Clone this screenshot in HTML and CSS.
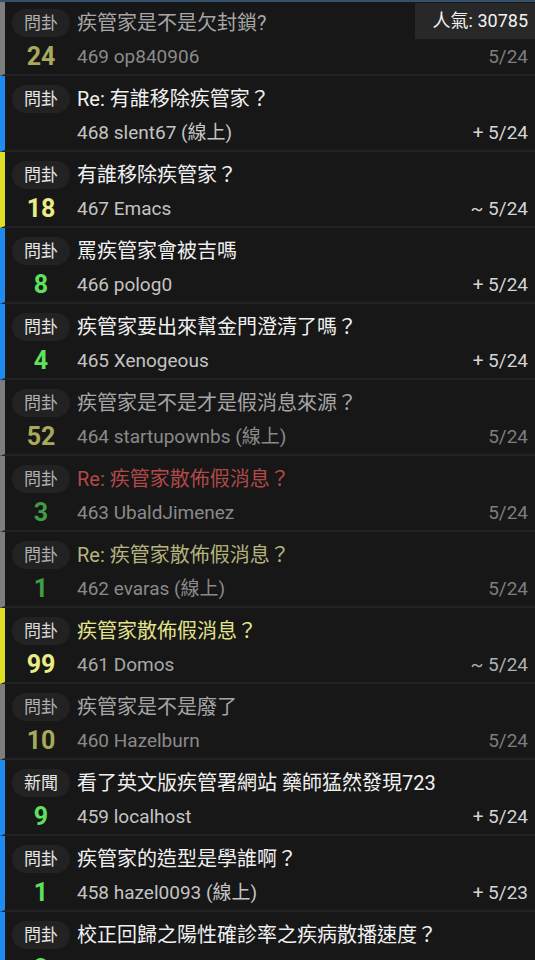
FILE: index.html
```html
<!DOCTYPE html>
<html lang="zh-Hant">
<head>
<meta charset="utf-8">
<title>PTT</title>
<link rel="stylesheet" href="styles.css">
</head>
<body>
<div class="list">
  <div class="row s-gray read">
    <span class="tag">問卦</span>
    <div class="title">疾管家是不是欠封鎖?</div>
    <span class="num dy">24</span>
    <div class="meta"><span>469 op840906</span><span class="date">5/24</span></div>
  </div>
  <div class="row s-blue">
    <span class="tag">問卦</span>
    <div class="title">Re: 有誰移除疾管家？</div>
    <span class="num"></span>
    <div class="meta"><span>468 slent67 (線上)</span><span class="date">+ 5/24</span></div>
  </div>
  <div class="row s-yellow">
    <span class="tag">問卦</span>
    <div class="title">有誰移除疾管家？</div>
    <span class="num by">18</span>
    <div class="meta"><span>467 Emacs</span><span class="date">~ 5/24</span></div>
  </div>
  <div class="row s-blue">
    <span class="tag">問卦</span>
    <div class="title">罵疾管家會被吉嗎</div>
    <span class="num bg">8</span>
    <div class="meta"><span>466 polog0</span><span class="date">+ 5/24</span></div>
  </div>
  <div class="row s-blue">
    <span class="tag">問卦</span>
    <div class="title">疾管家要出來幫金門澄清了嗎？</div>
    <span class="num bg">4</span>
    <div class="meta"><span>465 Xenogeous</span><span class="date">+ 5/24</span></div>
  </div>
  <div class="row s-gray read">
    <span class="tag">問卦</span>
    <div class="title">疾管家是不是才是假消息來源？</div>
    <span class="num dy">52</span>
    <div class="meta"><span>464 startupownbs (線上)</span><span class="date">5/24</span></div>
  </div>
  <div class="row s-gray read">
    <span class="tag">問卦</span>
    <div class="title t-red">Re: 疾管家散佈假消息？</div>
    <span class="num dg">3</span>
    <div class="meta"><span>463 UbaldJimenez</span><span class="date">5/24</span></div>
  </div>
  <div class="row s-gray read">
    <span class="tag">問卦</span>
    <div class="title t-olive">Re: 疾管家散佈假消息？</div>
    <span class="num dg">1</span>
    <div class="meta"><span>462 evaras (線上)</span><span class="date">5/24</span></div>
  </div>
  <div class="row s-yellow read">
    <span class="tag">問卦</span>
    <div class="title t-yellow">疾管家散佈假消息？</div>
    <span class="num by">99</span>
    <div class="meta"><span>461 Domos</span><span class="date">~ 5/24</span></div>
  </div>
  <div class="row s-gray read">
    <span class="tag">問卦</span>
    <div class="title">疾管家是不是廢了</div>
    <span class="num dy">10</span>
    <div class="meta"><span>460 Hazelburn</span><span class="date">5/24</span></div>
  </div>
  <div class="row s-blue">
    <span class="tag">新聞</span>
    <div class="title">看了英文版疾管署網站 藥師猛然發現723</div>
    <span class="num bg">9</span>
    <div class="meta"><span>459 localhost</span><span class="date">+ 5/24</span></div>
  </div>
  <div class="row s-blue">
    <span class="tag">問卦</span>
    <div class="title">疾管家的造型是學誰啊？</div>
    <span class="num bg">1</span>
    <div class="meta"><span>458 hazel0093 (線上)</span><span class="date">+ 5/23</span></div>
  </div>
  <div class="row s-blue">
    <span class="tag">問卦</span>
    <div class="title">校正回歸之陽性確診率之疾病散播速度？</div>
    <span class="num bg">3</span>
    <div class="meta"><span>457 elin</span><span class="date">5/23</span></div>
  </div>
</div>
<div class="popularity">人氣: 30785</div>
</body>
</html>
```
FILE: styles.css
```css
html, body {
  margin: 0;
  padding: 0;
  background: #161616;
  height: 960px;
  overflow: hidden;
}
body {
  font-family: Roboto, "Noto Sans CJK TC", sans-serif;
  color: #ececec;
  border-top: 2px solid #35506a;
  box-sizing: border-box;
  position: relative;
}
.list {
  display: flex;
  flex-direction: column;
  margin-top: -2px;
}
.row {
  display: grid;
  grid-template-columns: 72px 1fr;
  grid-template-rows: 28px 28px;
  row-gap: 6px;
  padding: 9px 7px 3px 0;
  border-left: 5px solid #7a7a7a;
  border-bottom: 2px solid #222;
  background: #171717;
  height: 76px;
  box-sizing: border-box;
}
.s-gray { border-left-color: #7d7d7d; }
.s-blue { border-left-color: #1e8bf0; }
.s-yellow { border-left-color: #dede24; }

.tag {
  justify-self: center;
  width: 58px;
  height: 28px;
  border-radius: 14px;
  background: #222;
  font-size: 17px;
  line-height: 28px;
  text-align: center;
  color: #e6e6e6;
}
.title {
  font-size: 20px;
  line-height: 28px;
  white-space: nowrap;
  overflow: hidden;
  color: #f0f0f0;
}
.num {
  justify-self: center;
  font-size: 25px;
  font-weight: 700;
  line-height: 28px;
}
.meta {
  display: flex;
  justify-content: space-between;
  font-size: 19px;
  line-height: 28px;
  color: #c4c4c4;
  white-space: nowrap;
}
.date { color: #d4d4d4; }

.read .tag { color: #b0b0b0; }
.read .title { color: #a6a6a6; }
.read .meta { color: #8a8a8a; }
.read .date { color: #7e7e7e; }
.s-yellow.read .date { color: #b0b0b0; }
.s-yellow.read .meta { color: #a8a8a8; }
.s-yellow.read .tag { color: #d8d8d8; }

.read .title.t-red { color: #b0494a; }
.read .title.t-olive { color: #b4b47c; }
.read .title.t-yellow { color: #e4e48a; }

.num.by { color: #ecec84; }
.num.dy { color: #a9a95c; }
.num.bg { color: #5ee25e; }
.num.dg { color: #3e9e42; }

.popularity {
  position: absolute;
  top: 1px;
  right: 0;
  width: 120px;
  height: 36px;
  box-sizing: border-box;
  padding-right: 7px;
  background: #282828;
  font-size: 18px;
  line-height: 36px;
  color: #f2f2f2;
  text-align: right;
}
```
